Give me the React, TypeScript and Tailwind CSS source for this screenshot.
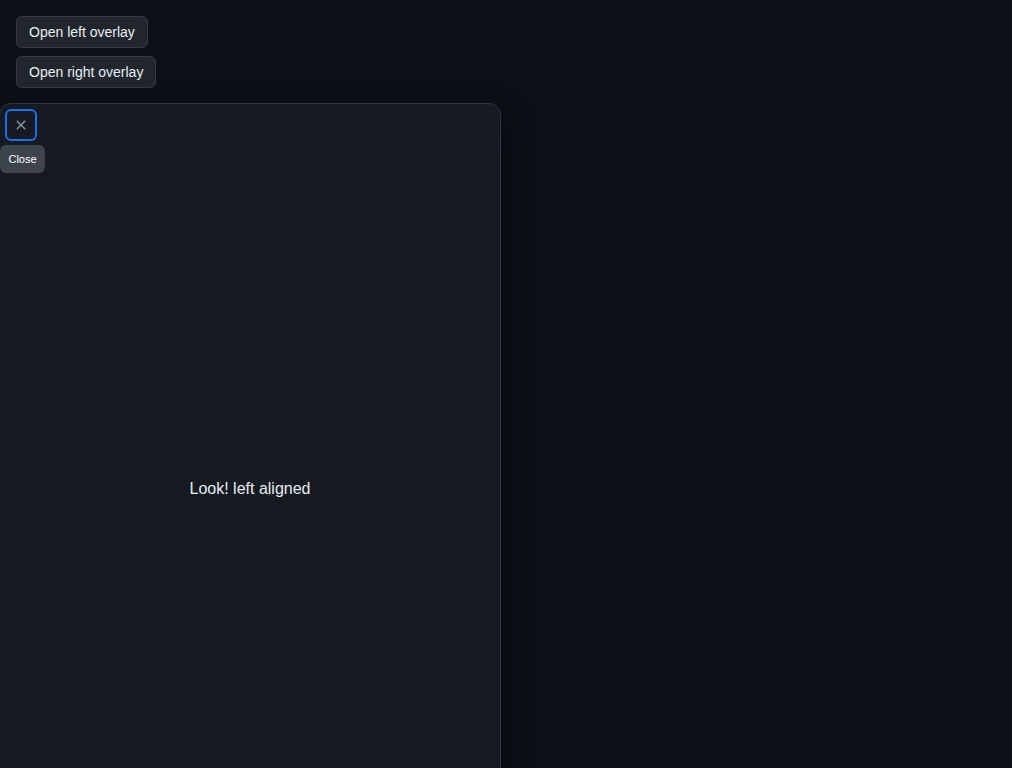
import React from "react";

export default function App() {
  return (
    <div
      className="h-screen w-full overflow-hidden bg-[#0d1117] text-[#e6edf3]"
      style={{ fontFamily: '"Liberation Sans", Arial, sans-serif' }}
    >
      <div className="flex flex-col items-start gap-2 pt-4 pl-4">
        <button className="h-8 rounded-md border border-[#363b42] bg-[#21262d] px-3 text-sm text-[#e6edf3]">
          Open left overlay
        </button>
        <button className="h-8 rounded-md border border-[#363b42] bg-[#21262d] px-3 text-sm text-[#e6edf3]">
          Open right overlay
        </button>
      </div>
      <div className="relative -ml-px mt-[15px] flex h-[770px] w-[502px] items-center justify-center rounded-xl border border-[#30363d] bg-[#161b22] pt-0.5 shadow-[0_16px_32px_rgba(1,4,9,0.85)]">
        <button className="absolute left-[5px] top-[5px] flex h-8 w-8 items-center justify-center rounded-md border-2 border-[#1f6feb] bg-transparent text-[#8b949e]">
          <svg width="16" height="16" viewBox="0 0 16 16" fill="currentColor">
            <path d="M3.72 3.72a.75.75 0 0 1 1.06 0L8 6.94l3.22-3.22a.749.749 0 0 1 1.275.326.749.749 0 0 1-.215.734L9.06 8l3.22 3.22a.749.749 0 0 1-.326 1.275.749.749 0 0 1-.734-.215L8 9.06l-3.22 3.22a.751.751 0 0 1-1.042-.018.751.751 0 0 1-.018-1.042L6.94 8 3.72 4.78a.75.75 0 0 1 0-1.06Z" />
          </svg>
        </button>
        <div className="absolute left-0 top-[41px] flex h-7 w-[45px] items-center justify-center rounded-md bg-[#3d444d] text-[11px] text-[#ffffff]">
          Close
        </div>
        <p className="text-base text-[#e6edf3]">Look! left aligned</p>
      </div>
    </div>
  );
}
